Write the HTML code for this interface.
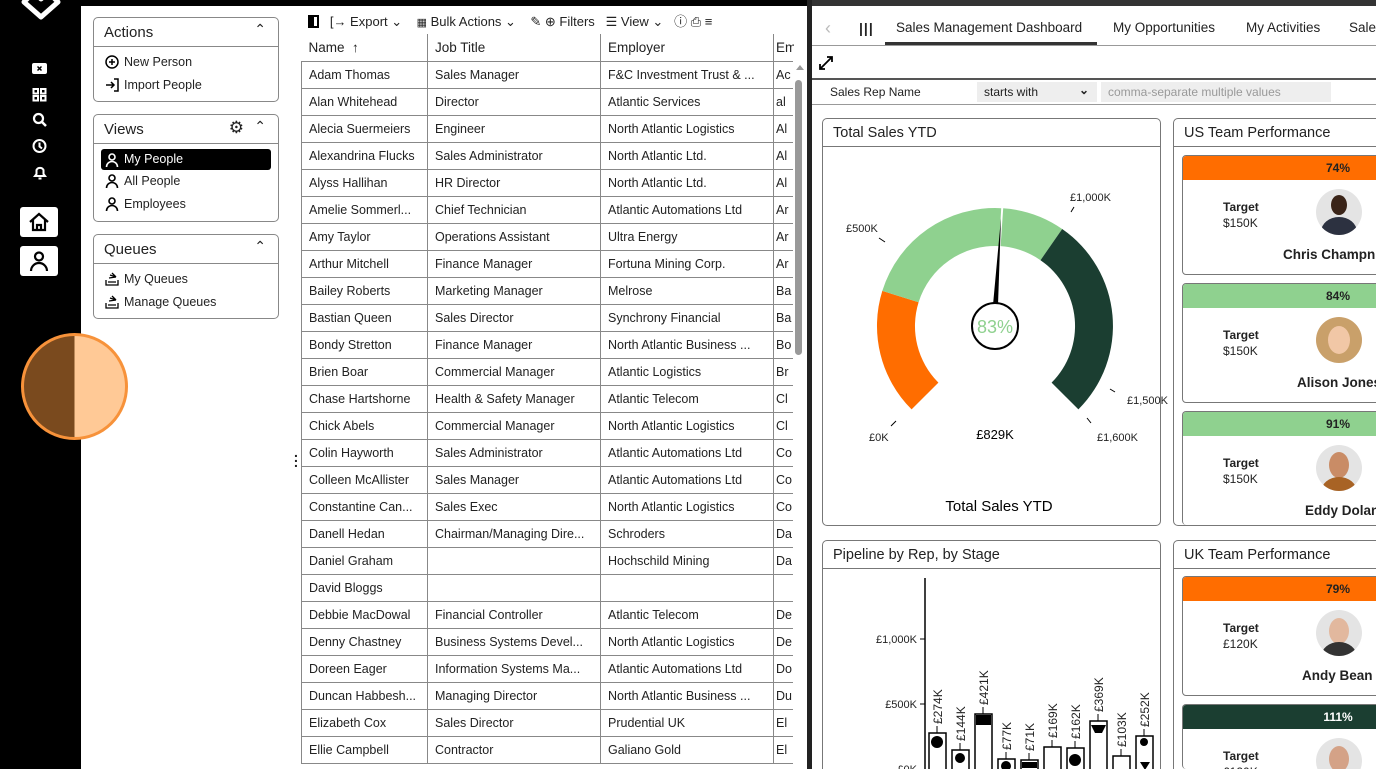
<!DOCTYPE html>
<html style="width:1376px;height:769px;overflow:hidden"><head><meta charset="utf-8"><style>
*{box-sizing:border-box;margin:0;padding:0}
body{width:1376px;height:769px;overflow:hidden;background:#fff;font-family:"Liberation Sans",sans-serif;font-size:13px;color:#222;position:relative}
.abs{position:absolute}
.box{position:absolute;left:93px;width:186px;border:1px solid #888;border-radius:5px;background:#fff}
.box .hd{height:29px;border-bottom:1px solid #888;padding:6px 10px;font-size:15px;position:relative}
.box .hd .car{position:absolute;right:12px;top:3px;font-size:14px}
.box .it{height:23px;padding:4px 10px 0 30px;position:relative;font-size:12.5px}
.box .it svg{position:absolute;left:11px;top:4px}
.sel{background:#000;color:#fff;margin:0 7px;border-radius:3px;padding-left:23px!important}
.sel svg{left:4px!important}
table{position:absolute;left:301px;top:34px;border-collapse:collapse;table-layout:fixed;width:492px}
td{height:27px;border:1px solid #888;padding:0 7px;white-space:nowrap;overflow:hidden;font-size:12.5px}
th{height:27px;border-right:1px solid #888;border-bottom:1px solid #888;padding:0 7px;text-align:left;font-weight:normal;font-size:13.5px;white-space:nowrap;overflow:hidden}
.tab{position:absolute;top:20px;font-size:13.5px}
.card{position:absolute;border:1px solid #777;border-radius:5px;background:#fff;overflow:hidden}
.card .hd{height:28px;border-bottom:1px solid #777;padding:6px 10px;font-size:14.5px}
.pc{position:absolute;left:1182px;width:210px;border:1px solid #777;border-radius:4px;background:#fff;overflow:hidden}
.pc .bar{height:24px;text-align:center;font-weight:bold;font-size:12px;padding-top:5px;padding-left:102px}
.pc .t{position:absolute;left:40px;top:43px;font-size:12px;line-height:16px}
.pc .av{position:absolute;left:133px;top:33px;width:46px;height:46px;border-radius:50%;background:#e4e4e4;overflow:hidden}
.pc .nm{position:absolute;left:100px;top:91px;font-weight:bold;font-size:13.5px;white-space:nowrap}
</style></head><body>
<div class="abs" style="left:0;top:0;width:81px;height:769px;background:#000"></div>
<div class="abs" style="left:81px;top:0;width:726px;height:6px;background:#000"></div>
<svg class="abs" style="left:16px;top:-12px" width="50" height="32" viewBox="0 0 50 32"><path d="M8 14 L18 4 L25 11 L32 4 L42 14 L25 29 Z" fill="none" stroke="#fff" stroke-width="5" stroke-linejoin="round"/></svg>
<svg class="abs" style="left:30px;top:60px" width="20" height="125" viewBox="0 0 20 125" fill="none" stroke="#fff" stroke-width="2">
<rect x="3" y="4" width="13" height="9" rx="1" fill="#fff"/><path d="M7.5 6.5l4 4M11.5 6.5l-4 4" stroke="#000" stroke-width="1.5"/>
<rect x="3.5" y="29" width="4.5" height="4.5"/><rect x="11" y="29" width="4.5" height="4.5"/><rect x="3.5" y="36" width="4.5" height="4.5"/><rect x="11" y="36" width="4.5" height="4.5"/>
<circle cx="8.5" cy="58.5" r="4.5" stroke-width="2.2"/><path d="M12 62l4 4" stroke-width="2.5"/>
<circle cx="9.5" cy="86" r="6"/><path d="M9.5 82.5v4l2.5 2"/>
<path d="M5 116h10l-1.5-2v-4a4 4 0 0 0-7 0v4z M8.5 118.5h3"/>
</svg>
<div class="abs" style="left:20px;top:207px;width:38px;height:30px;background:#fff;border-radius:3px"></div>
<svg class="abs" style="left:28px;top:211px" width="22" height="22" viewBox="0 0 22 22" fill="none" stroke="#000" stroke-width="2.2"><path d="M2 11L11 3l9 8M5 9v10h12V9M9 19v-5h4v5"/></svg>
<div class="abs" style="left:20px;top:246px;width:38px;height:30px;background:#fff;border-radius:3px"></div>
<svg class="abs" style="left:28px;top:250px" width="22" height="22" viewBox="0 0 22 22" fill="none" stroke="#000" stroke-width="2.2"><circle cx="11" cy="6.5" r="4"/><path d="M3 21a8 8 0 0 1 16 0"/></svg>
<div class="abs" style="left:21px;top:333px;width:107px;height:107px;border-radius:50%;border:3px solid #f7923a;background:linear-gradient(90deg,#7a4a1e 50%,#ffc996 50%)"></div>

<div class="box" style="top:17px;height:85px"><div class="hd">Actions<span class="car">&#8963;</span></div>
<div class="it" style="margin-top:4px"><svg width="14" height="14" viewBox="0 0 14 14" fill="none" stroke="#000" stroke-width="1.5"><circle cx="7" cy="7" r="6"/><path d="M7 4v6M4 7h6"/></svg>New Person</div>
<div class="it"><svg width="14" height="14" viewBox="0 0 14 14" fill="none" stroke="#000" stroke-width="1.5"><path d="M1 7h8M6 4l3 3-3 3M9 1h4v12H9"/></svg>Import People</div></div>
<div class="box" style="top:114px;height:108px"><div class="hd">Views<span class="car">&#8963;</span><span style="position:absolute;right:34px;top:3px;font-size:17px">&#9881;</span></div>
<div class="it sel" style="margin-top:5px;height:21px;padding-top:3px"><svg width="14" height="14" viewBox="0 0 14 14" fill="none" stroke="#fff" stroke-width="1.6"><circle cx="7" cy="4" r="3"/><path d="M1.5 14a5.5 5.5 0 0 1 11 0"/></svg>My People</div>
<div class="it"><svg width="14" height="14" viewBox="0 0 14 14" fill="none" stroke="#000" stroke-width="1.6"><circle cx="7" cy="4" r="3"/><path d="M1.5 14a5.5 5.5 0 0 1 11 0"/></svg>All People</div>
<div class="it"><svg width="14" height="14" viewBox="0 0 14 14" fill="none" stroke="#000" stroke-width="1.6"><circle cx="7" cy="4" r="3"/><path d="M1.5 14a5.5 5.5 0 0 1 11 0"/></svg>Employees</div></div>
<div class="box" style="top:234px;height:85px"><div class="hd">Queues<span class="car">&#8963;</span></div>
<div class="it" style="margin-top:4px"><svg width="14" height="14" viewBox="0 0 14 14" fill="none" stroke="#000" stroke-width="1.3"><path d="M1 8v5h12V8M3 10h8M4 6l7-1M5 3l6 2M7 1l4 4"/></svg>My Queues</div>
<div class="it"><svg width="14" height="14" viewBox="0 0 14 14" fill="none" stroke="#000" stroke-width="1.3"><path d="M1 8v5h12V8M3 10h8M4 6l7-1M5 3l6 2M7 1l4 4"/></svg>Manage Queues</div></div>
<div class="abs" style="left:294px;top:450px;font-size:14px;font-weight:bold;line-height:5px">.<br>.<br>.</div>

<div class="abs" style="left:308px;top:11px;font-size:13px;white-space:nowrap">
<span style="display:inline-block;width:11px;height:13px;border:2px solid #000;border-left-width:6px;vertical-align:-2px"></span>
&nbsp;&nbsp;[&#8594; Export &#8964;&nbsp;&nbsp;&nbsp; <span style="font-size:11px">&#9638;</span> Bulk Actions &#8964;&nbsp;&nbsp;&nbsp; &#9998; &#8853; Filters&nbsp;&nbsp; &#9776; View &#8964;&nbsp;&nbsp; &#9432; &#9113; &#8801;</div>

<table>
<colgroup><col style="width:126px"><col style="width:173px"><col style="width:173px"><col style="width:20px"></colgroup>
<tr><th>Name &nbsp;&#8593;</th><th>Job Title</th><th>Employer</th><th style="border-right:none;padding:0 2px">Ema</th></tr>
<tr><td>Adam Thomas</td><td>Sales Manager</td><td>F&amp;C Investment Trust &amp; ...</td><td style="padding:0 2px">Ac</td></tr>
<tr><td>Alan Whitehead</td><td>Director</td><td>Atlantic Services</td><td style="padding:0 2px">al</td></tr>
<tr><td>Alecia Suermeiers</td><td>Engineer</td><td>North Atlantic Logistics</td><td style="padding:0 2px">Al</td></tr>
<tr><td>Alexandrina Flucks</td><td>Sales Administrator</td><td>North Atlantic Ltd.</td><td style="padding:0 2px">Al</td></tr>
<tr><td>Alyss Hallihan</td><td>HR Director</td><td>North Atlantic Ltd.</td><td style="padding:0 2px">Al</td></tr>
<tr><td>Amelie Sommerl...</td><td>Chief Technician</td><td>Atlantic Automations Ltd</td><td style="padding:0 2px">Ar</td></tr>
<tr><td>Amy Taylor</td><td>Operations Assistant</td><td>Ultra Energy</td><td style="padding:0 2px">Ar</td></tr>
<tr><td>Arthur Mitchell</td><td>Finance Manager</td><td>Fortuna Mining Corp.</td><td style="padding:0 2px">Ar</td></tr>
<tr><td>Bailey Roberts</td><td>Marketing Manager</td><td>Melrose</td><td style="padding:0 2px">Ba</td></tr>
<tr><td>Bastian Queen</td><td>Sales Director</td><td>Synchrony Financial</td><td style="padding:0 2px">Ba</td></tr>
<tr><td>Bondy Stretton</td><td>Finance Manager</td><td>North Atlantic Business ...</td><td style="padding:0 2px">Bo</td></tr>
<tr><td>Brien Boar</td><td>Commercial Manager</td><td>Atlantic Logistics</td><td style="padding:0 2px">Br</td></tr>
<tr><td>Chase Hartshorne</td><td>Health &amp; Safety Manager</td><td>Atlantic Telecom</td><td style="padding:0 2px">Cl</td></tr>
<tr><td>Chick Abels</td><td>Commercial Manager</td><td>North Atlantic Logistics</td><td style="padding:0 2px">Cl</td></tr>
<tr><td>Colin Hayworth</td><td>Sales Administrator</td><td>Atlantic Automations Ltd</td><td style="padding:0 2px">Co</td></tr>
<tr><td>Colleen McAllister</td><td>Sales Manager</td><td>Atlantic Automations Ltd</td><td style="padding:0 2px">Co</td></tr>
<tr><td>Constantine Can...</td><td>Sales Exec</td><td>North Atlantic Logistics</td><td style="padding:0 2px">Co</td></tr>
<tr><td>Danell Hedan</td><td>Chairman/Managing Dire...</td><td>Schroders</td><td style="padding:0 2px">Da</td></tr>
<tr><td>Daniel Graham</td><td></td><td>Hochschild Mining</td><td style="padding:0 2px">Da</td></tr>
<tr><td>David Bloggs</td><td></td><td></td><td></td></tr>
<tr><td>Debbie MacDowal</td><td>Financial Controller</td><td>Atlantic Telecom</td><td style="padding:0 2px">De</td></tr>
<tr><td>Denny Chastney</td><td>Business Systems Devel...</td><td>North Atlantic Logistics</td><td style="padding:0 2px">De</td></tr>
<tr><td>Doreen Eager</td><td>Information Systems Ma...</td><td>Atlantic Automations Ltd</td><td style="padding:0 2px">Do</td></tr>
<tr><td>Duncan Habbesh...</td><td>Managing Director</td><td>North Atlantic Business ...</td><td style="padding:0 2px">Du</td></tr>
<tr><td>Elizabeth Cox</td><td>Sales Director</td><td>Prudential UK</td><td style="padding:0 2px">El</td></tr>
<tr><td>Ellie Campbell</td><td>Contractor</td><td>Galiano Gold</td><td style="padding:0 2px">El</td></tr>
</table>
<div class="abs" style="left:793px;top:61px;width:14px;height:708px;background:#fff"></div>
<div class="abs" style="left:795px;top:80px;width:7px;height:275px;background:#999;border-radius:4px"></div>
<div class="abs" style="left:796px;top:65px;width:0;height:0;border:4px solid transparent;border-bottom:5px solid #999;border-top:0"></div>
<div class="abs" style="left:807px;top:0;width:5px;height:769px;background:#222"></div>

<div class="abs" style="left:812px;top:0;width:564px;height:6px;background:#333"></div>
<div class="abs" style="left:825px;top:18px;color:#bbb;font-size:18px">&#8249;</div>
<div class="abs" style="left:859px;top:20px;font-size:14px;font-weight:bold;letter-spacing:1px">|||</div>
<div class="tab" style="left:896px">Sales Management Dashboard</div>
<div class="abs" style="left:885px;top:42px;width:212px;height:3px;background:#333"></div>
<div class="tab" style="left:1113px">My Opportunities</div>
<div class="tab" style="left:1246px">My Activities</div>
<div class="tab" style="left:1349px">Sales</div>
<div class="abs" style="left:812px;top:45px;width:564px;height:1px;background:#999"></div>
<svg class="abs" style="left:818px;top:55px" width="16" height="16" viewBox="0 0 16 16" fill="none" stroke="#000" stroke-width="1.8"><path d="M2 14l12-12M9 2h5v5M2 9v5h5"/></svg>
<div class="abs" style="left:812px;top:78px;width:564px;height:2px;background:#555"></div>
<div class="abs" style="left:830px;top:85px;font-size:12px">Sales Rep Name</div>
<div class="abs" style="left:977px;top:82px;width:120px;height:20px;background:#eee;font-size:12px;padding:3px 7px">starts with<span style="position:absolute;right:8px;top:1px;font-weight:bold">&#8964;</span></div>
<div class="abs" style="left:1101px;top:82px;width:230px;height:20px;background:#eee;font-size:12px;padding:3px 7px;color:#999">comma-separate multiple values</div>
<div class="abs" style="left:812px;top:104px;width:564px;height:1px;background:#999"></div>

<div class="card" style="left:822px;top:118px;width:339px;height:408px"><div class="hd">Total Sales YTD</div></div>
<div class="card" style="left:1173px;top:118px;width:220px;height:408px"><div class="hd">US Team Performance</div></div>
<div class="card" style="left:822px;top:540px;width:339px;height:240px"><div class="hd">Pipeline by Rep, by Stage</div></div>
<div class="card" style="left:1173px;top:540px;width:220px;height:240px"><div class="hd">UK Team Performance</div></div>

<svg class="abs" style="left:0;top:0" width="1376" height="769">
<path d="M911.6 409.4 A118 118 0 0 1 882.3 290.9 L918.6 302.2 A80 80 0 0 0 938.4 382.6 Z" fill="#ff6d00"/>
<path d="M882.3 290.9 A118 118 0 0 1 1001.2 208.2 L999.2 246.1 A80 80 0 0 0 918.6 302.2 Z" fill="#8fd18f"/>
<path d="M1003.2 208.3 A118 118 0 0 1 1062.2 229.0 L1040.5 260.2 A80 80 0 0 0 1000.6 246.1 Z" fill="#8fd18f"/>
<path d="M1062.2 229.0 A118 118 0 0 1 1078.4 409.4 L1051.6 382.6 A80 80 0 0 0 1040.5 260.2 Z" fill="#1b3e31"/>
<path d="M1001 218 L998 305 L993 305 Z" fill="#000"/>
<circle cx="995" cy="326" r="23" fill="#fff" stroke="#000" stroke-width="2"/>
<text x="995" y="333" text-anchor="middle" font-size="18" fill="#8fd18f" font-family="Liberation Sans">83%</text>
<g stroke="#000" stroke-width="1"><path d="M896 421l-5 5M885 242l-6-4M1074 207l-3 5M1110 389l5 3M1087 418l4 5"/></g>
<g font-size="11" font-family="Liberation Sans" fill="#222">
<text x="869" y="441">£0K</text><text x="846" y="232">£500K</text><text x="1070" y="201">£1,000K</text><text x="1127" y="404">£1,500K</text><text x="1097" y="441">£1,600K</text></g>
<text x="995" y="439" text-anchor="middle" font-size="13" font-family="Liberation Sans">£829K</text>
<text x="999" y="511" text-anchor="middle" font-size="15" font-family="Liberation Sans">Total Sales YTD</text>
<path d="M925 578V769" stroke="#000" stroke-width="1.5"/>
<g font-size="11" font-family="Liberation Sans" fill="#222"><text x="917" y="643" text-anchor="end">£1,000K</text><text x="917" y="708" text-anchor="end">£500K</text><text x="917" y="773" text-anchor="end">£0K</text></g>
<path d="M920 639h5M920 704h5" stroke="#000"/>
<g stroke="#000" stroke-width="1.5" fill="#fff">
<rect x="929" y="733" width="17" height="40"/><rect x="952" y="750" width="17" height="25"/><rect x="975" y="714" width="17" height="60"/><rect x="998" y="759" width="17" height="15"/><rect x="1021" y="760" width="17" height="15"/><rect x="1044" y="747" width="17" height="25"/><rect x="1067" y="748" width="17" height="25"/><rect x="1090" y="721" width="17" height="52"/><rect x="1113" y="756" width="17" height="15"/><rect x="1136" y="736" width="17" height="35"/></g>
<g fill="#000"><circle cx="937" cy="742" r="6"/><circle cx="960" cy="758" r="5"/><rect x="976" y="715" width="15" height="10"/><circle cx="1006" cy="766" r="5"/><rect x="1022" y="762" width="15" height="6"/><circle cx="1075" cy="760" r="6"/><path d="M1091 725h15l-4 8h-7z"/><path d="M1140 762l5 8 5-8z"/><circle cx="1144" cy="742" r="4"/></g>
<g stroke="#000" stroke-width="1"><path d="M937 733v-7M960 750v-7M983 714v-7M1006 759v-7M1029 760v-7M1052 747v-7M1075 748v-7M1098 721v-7M1121 756v-7M1144 736v-7"/></g>
<g font-size="12" font-family="Liberation Sans" fill="#222">
<text transform="translate(942,724) rotate(-90)">£274K</text><text transform="translate(965,741) rotate(-90)">£144K</text><text transform="translate(988,705) rotate(-90)">£421K</text><text transform="translate(1011,750) rotate(-90)">£77K</text><text transform="translate(1034,751) rotate(-90)">£71K</text><text transform="translate(1057,738) rotate(-90)">£169K</text><text transform="translate(1080,739) rotate(-90)">£162K</text><text transform="translate(1103,712) rotate(-90)">£369K</text><text transform="translate(1126,747) rotate(-90)">£103K</text><text transform="translate(1149,727) rotate(-90)">£252K</text></g>
</svg>

<div class="pc" style="top:155px;height:120px"><div class="bar" style="background:#ff6d00">74%</div><div class="t"><b>Target</b><br>$150K</div><div class="av"><div style="position:absolute;left:15px;top:6px;width:16px;height:20px;border-radius:50%;background:#3a2418"></div><div style="position:absolute;left:5px;top:28px;width:36px;height:30px;border-radius:50%;background:#2c3140"></div></div><div class="nm">Chris Champni</div></div>
<div class="pc" style="top:283px;height:120px"><div class="bar" style="background:#8fd18f">84%</div><div class="t"><b>Target</b><br>$150K</div><div class="av" style="background:#c9a06a"><div style="position:absolute;left:12px;top:9px;width:22px;height:28px;border-radius:50%;background:#f1c7a6"></div></div><div class="nm" style="left:114px">Alison Jones</div></div>
<div class="pc" style="top:411px;height:114px;border-bottom:none"><div class="bar" style="background:#8fd18f">91%</div><div class="t"><b>Target</b><br>$150K</div><div class="av"><div style="position:absolute;left:13px;top:7px;width:20px;height:26px;border-radius:50%;background:#c98c66"></div><div style="position:absolute;left:5px;top:32px;width:36px;height:30px;border-radius:50%;background:#a86325"></div></div><div class="nm" style="left:122px">Eddy Dolan</div></div>
<div class="pc" style="top:576px;height:120px"><div class="bar" style="background:#ff6d00">79%</div><div class="t"><b>Target</b><br>£120K</div><div class="av"><div style="position:absolute;left:13px;top:8px;width:20px;height:26px;border-radius:50%;background:#e2b89e"></div><div style="position:absolute;left:5px;top:32px;width:36px;height:30px;border-radius:50%;background:#333"></div></div><div class="nm" style="left:119px">Andy Bean</div></div>
<div class="pc" style="top:704px;height:65px;border-bottom:none"><div class="bar" style="background:#1b3e31;color:#fff">111%</div><div class="t"><b>Target</b><br>£120K</div><div class="av"><div style="position:absolute;left:13px;top:8px;width:20px;height:26px;border-radius:50%;background:#d4a287"></div></div></div>
</body></html>
